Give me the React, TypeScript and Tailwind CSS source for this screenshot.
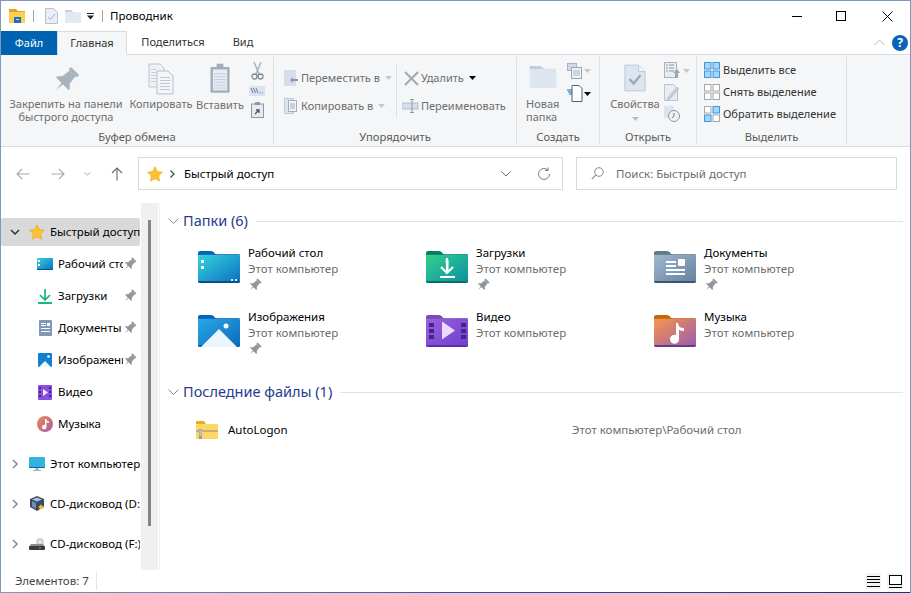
import React from "react";

const F = "font-['Noto_Sans','Open_Sans',sans-serif]";

function Pin({ c = "#8f979e", s = 14 }: { c?: string; s?: number }) {
  return (
    <svg width={s} height={s} viewBox="0 0 24 24" className="shrink-0">
      <g transform="rotate(45 12 12)" fill={c}>
        <rect x="7" y="1" width="10" height="3" rx="1" />
        <path d="M8.500 4h7l1 8 3 3v1.500H4.500V15l3-3z" />
        <path d="M11 16h2l-1 8z" />
      </g>
    </svg>
  );
}

function Folder({ id, from, to, tab, dark, children }: { id: string; from: string; to: string; tab: string; dark: string; children?: React.ReactNode }) {
  return (
    <svg width="42" height="33" viewBox="0 0 42 33" className="shrink-0">
      <defs>
        <linearGradient id={id} x1="0" y1="0" x2="1" y2="1">
          <stop offset="0" stopColor={from} />
          <stop offset="1" stopColor={to} />
        </linearGradient>
      </defs>
      <path d="M0 3a2 2 0 0 1 2-2h11q2 0 3 1.500L18 5H0z" fill={tab} />
      <path d="M0 6q0-1.500 1.500-1.500h8L16 4.500h24.500Q42 4.500 42 6v25q0 2-2 2H2q-2 0-2-2z" fill={`url(#${id})`} />
      <rect x="0" y="4" width="42" height="1" fill={tab} opacity=".7" />
      <path d="M0 31h42q0 2-2 2H2q-2 0-2-2z" fill={dark} />
      {children}
    </svg>
  );
}

const folders = {
  desk: (
    <Folder id="f1" from="#35d3dd" to="#0a6fc0" tab="#0a63b8" dark="#0d4f80">
      <rect x="3" y="10" width="3" height="3" fill="#fff" />
      <rect x="3" y="16" width="3" height="3" fill="#fff" />
      <rect x="33" y="29" width="2" height="2" fill="#cfeaf5" />
      <rect x="37" y="29" width="2" height="2" fill="#cfeaf5" />
    </Folder>
  ),
  down: (
    <Folder id="f2" from="#33d090" to="#0b8f9f" tab="#0a7c66" dark="#0d6b6a">
      <path d="M19.500 10h3v10h2.500l-4 0z" fill="#fff" />
      <path d="M21 8v15M15 17l6 6 6-6" fill="none" stroke="#fff" strokeWidth="2.200" />
      <rect x="14" y="26" width="15" height="2" fill="#fff" />
    </Folder>
  ),
  docs: (
    <Folder id="f3" from="#a2b8cf" to="#62809f" tab="#5d7b8c" dark="#3e5468">
      <rect x="12" y="11" width="10" height="2" fill="#fff" />
      <rect x="12" y="15" width="10" height="2" fill="#fff" />
      <rect x="24" y="9" width="7" height="7" rx="1" fill="#fff" />
      <rect x="12" y="19" width="19" height="2" fill="#fff" />
      <rect x="12" y="23" width="19" height="2" fill="#fff" />
    </Folder>
  ),
  pics: (
    <Folder id="f4" from="#2aa8e6" to="#0a69bc" tab="#0a63b8" dark="#0b5fa8">
      <circle cx="28" cy="12" r="2.500" fill="#fff" />
      <path d="M3 33 L21 15 L39 33z" fill="#eaf5fc" />
    </Folder>
  ),
  video: (
    <Folder id="f5" from="#9b5fe0" to="#6d3fd0" tab="#7a4bb5" dark="#5a2fa8">
      <path d="M16 10l13 9-13 9z" fill="#e8dcf8" transform="translate(0 -2.500)" />
      {[9, 15, 21].map((y) => (
        <g key={y}>
          <rect x="3" y={y} width="5" height="4" fill="#3f2a80" />
          <rect x="35" y={y} width="5" height="4" fill="#3f2a80" />
        </g>
      ))}
    </Folder>
  ),
  music: (
    <Folder id="f6" from="#f9964a" to="#9a5ab0" tab="#c8660e" dark="#5d3f8a">
      <path d="M22 9h2q0 5 6 5v3q-3.500 0-5-1.500V25a4.500 4.500 0 1 1-3-4z" fill="#fff" />
    </Folder>
  ),
};

function Star({ s = 16 }: { s?: number }) {
  return (
    <svg width={s} height={s} viewBox="0 0 24 24" className="shrink-0">
      <path d="M12 1l3.400 7.300 7.800 1-5.700 5.500 1.500 8L12 19l-7 3.800 1.500-8L.8 9.300l7.800-1z" fill="#fdc02f" stroke="#eaa211" strokeWidth=".8" />
    </svg>
  );
}

function Caret({ c = "#000" }: { c?: string }) {
  return (
    <svg width="7" height="4" viewBox="0 0 7 4" className="shrink-0">
      <path d="M0 0h7L3.500 4z" fill={c} />
    </svg>
  );
}

function SmallBtn({ icon, label, caret }: { icon: React.ReactNode; label: string; caret?: React.ReactNode }) {
  return (
    <div className="flex items-center h-[22px] gap-[1px]">
      <div className="w-[18px] h-[18px] flex items-center justify-center shrink-0">{icon}</div>
      <span className="whitespace-nowrap">{label}</span>
      {caret && <span className="ml-[4px]">{caret}</span>}
    </div>
  );
}

function Group({ w, label, children }: { w: string; label: string; children: React.ReactNode }) {
  return (
    <div className={`${w} shrink-0 h-full flex flex-col border-r border-[#dfe0e1]`}>
      <div className="h-[73px] flex">{children}</div>
      <div className="flex-1 flex items-center justify-center text-[#5a5a5a] text-[11.200px] leading-none">{label}</div>
    </div>
  );
}

function SelRow({ label, cells }: { label: string; cells: number[] }) {
  return (
    <div className="flex items-center h-[22px] gap-[3px]">
      <svg width="16" height="16" viewBox="0 0 16 16" className="shrink-0">
        {cells.map((c, i) => {
          const x = i % 2 === 0 ? 0 : 8.5;
          const y = i < 2 ? 0 : 8.5;
          return <rect key={i} x={x + .5} y={y + .5} width="6.500" height="6.500" fill={c ? "#a8d4f7" : "#fff"} stroke={c ? "#3a96dd" : "#a8a8a8"} />;
        })}
      </svg>
      <span className="whitespace-nowrap">{label}</span>
    </div>
  );
}

function Ribbon() {
  const disabled = "text-[#6e6e6e]";
  return (
    <div className="h-[92px] bg-[#f5f6f7] border-b border-[#dadbdc] flex items-stretch pt-[2px] pb-[2px] text-[11px] shrink-0">
      <Group w="w-[273px]" label="Буфер обмена">
        <div className={`flex ${disabled} text-center leading-[13px]`}>
          <div className="w-[126px] flex flex-col items-center pl-[4px] pt-[8px]">
            <div className="h-[30px] flex items-center justify-center">
              <Pin c="#a9b3be" s={28} />
            </div>
            <div className="mt-[2px] whitespace-nowrap">Закрепить на панели<br />быстрого доступа</div>
          </div>
          <div className="w-[68px] flex flex-col items-center pt-[6px]">
            <svg width="26" height="32" viewBox="0 0 26 32">
              <path d="M1 1h11l4 4v19H1z" fill="#eef1f5" stroke="#b9c4d2" />
              <path d="M9 8h11l5 5v18H9z" fill="#f3f5f8" stroke="#b3bfcd" />
              {[14, 17, 20, 23, 26].map((y) => <path key={y} d={`M12 ${y + .5}h10`} stroke="#bcc7d5" />)}
              {[6, 9, 12, 15, 18].map((y) => <path key={y} d={`M3 ${y + .5}h5`} stroke="#c5ced9" />)}
            </svg>
            <div className="mt-[2px] whitespace-nowrap">Копировать</div>
          </div>
          <div className="w-[50px] flex flex-col items-center pt-[5px]">
            <svg width="21" height="33" viewBox="0 0 22 33">
              <rect x=".5" y="4.500" width="20" height="27" fill="#a3adba" rx="1" />
              <rect x="3" y="7" width="15" height="22" fill="#e6ebf4" />
              <rect x="7" y="1" width="7" height="5" fill="#a3adba" />
              {[11, 14, 17, 20, 23, 26].map((y) => <path key={y} d={`M4 ${y + .5}h13`} stroke="#c4cfdf" />)}
            </svg>
            <div className="mt-[3px] whitespace-nowrap">Вставить</div>
          </div>
        </div>
        <div className="w-[22px] flex flex-col items-center pl-[2px] pt-[5px] gap-[6px]">
          <svg width="13" height="18" viewBox="0 0 13 18">
            <path d="M3 0l5 12M10 0L5 12" stroke="#a9b3be" strokeWidth="1.500" fill="none" />
            <circle cx="3.500" cy="14.500" r="2.500" fill="none" stroke="#7f8a97" strokeWidth="1.300" />
            <circle cx="9.500" cy="14.500" r="2.500" fill="none" stroke="#7f8a97" strokeWidth="1.300" />
          </svg>
          <svg width="16" height="10" viewBox="0 0 16 10">
            <rect width="16" height="10" fill="#dbe3ee" />
            <path d="M2 2l2 5M4.500 2l2 5M7 2l2 5" stroke="#6f7f92" fill="none" />
            <path d="M10.500 7h1M12.500 7h1" stroke="#6f7f92" />
          </svg>
          <svg width="13" height="16" viewBox="0 0 13 16">
            <rect x=".5" y="2" width="12" height="13.500" fill="#e7ebf1" stroke="#8d98a6" />
            <rect x="4" y="0" width="5" height="3" fill="#8d98a6" />
            <path d="M4 12l4-4M5 8h3v3" stroke="#4d5a68" strokeWidth="1.300" fill="none" />
          </svg>
        </div>
      </Group>

      <Group w="w-[243px]" label="Упорядочить">
        <div className={`flex ${disabled} w-full pl-[8px] pt-[10px]`}>
          <div className="w-[114px] flex flex-col gap-[6px]">
            <SmallBtn label="Переместить в" caret={<Caret c="#c8c8c8" />} icon={
              <svg width="14" height="16" viewBox="0 0 14 16"><rect width="12" height="16" fill="#d5deea" /><path d="M6 10l3-3v2h5v2H9v2z" fill="#8e99a6" /></svg>
            } />
            <SmallBtn label="Копировать в" caret={<Caret c="#c8c8c8" />} icon={
              <svg width="14" height="16" viewBox="0 0 14 16"><rect x=".5" y=".5" width="9" height="15" fill="#dde4ee" stroke="#c0ccdb" /><rect x="4.500" y="2.500" width="8" height="11" fill="#f1f3f6" stroke="#a4aebc" /><path d="M6 6h5M6 8h5M6 10h5" stroke="#a4aebc" /></svg>
            } />
          </div>
          <div className="w-px h-[54px] bg-[#dfe0e1] -mt-[3px]" />
          <div className="flex flex-col gap-[6px] pl-[5px]">
            <SmallBtn label="Удалить" caret={<Caret />} icon={
              <svg width="15" height="15" viewBox="0 0 15 15"><path d="M1 1l13 13M14 1L1 14" stroke="#9eaab7" strokeWidth="2" /></svg>
            } />
            <SmallBtn label="Переименовать" icon={
              <svg width="18" height="14" viewBox="0 0 18 14"><rect y="4" width="16" height="6" fill="#d5deea" stroke="#b1bdcb" /><path d="M10 1v12M8 .5h4M8 13.500h4" stroke="#8e99a6" fill="none" /></svg>
            } />
          </div>
        </div>
      </Group>

      <Group w="w-[83px]" label="Создать">
        <div className="flex pl-[9px] pt-[9px]">
          <div className={`w-[41px] ${disabled} leading-[13px]`}>
            <svg width="28" height="22" viewBox="0 0 30 25" className="ml-[3px]">
              <path d="M0 0h12l4 3h14v22H0z" fill="#dce5f0" />
              <path d="M0 0h12l4 3.500H0z" fill="#c1cee0" />
            </svg>
            <div className="mt-[9px]">Новая<br />папка</div>
          </div>
          <div className="flex flex-col gap-[6px] -mt-[3px]">
            <div className="flex items-center gap-[1px]">
              <svg width="16" height="16" viewBox="0 0 16 16"><rect x=".5" y=".5" width="9" height="7" fill="#cfd8e4" stroke="#a7b3c2" /><rect x="4.500" y="4.500" width="10" height="11" fill="#eef1f6" stroke="#99a6b6" /><path d="M6 8h7M6 10h7M6 12h7" stroke="#aeb9c7" /></svg>
              <Caret c="#c8c8c8" />
            </div>
            <div className="flex items-center gap-[1px]">
              <svg width="16" height="17" viewBox="0 0 16 17"><path d="M5 .5h7l3 3v13H5z" fill="#fff" stroke="#55606c" /><path d="M0 5h5M1 7h4M2 9h3" stroke="#1c62b3" /></svg>
              <Caret />
            </div>
          </div>
        </div>
      </Group>

      <Group w="w-[97px]" label="Открыть">
        <div className={`flex ${disabled} pl-[6px] pt-[7px]`}>
          <div className="w-[58px] flex flex-col items-center">
            <svg width="22" height="28" viewBox="0 0 24 30">
              <path d="M1 1h15l7 7v21H1z" fill="#dce5f0" stroke="#b6c6d8" />
              <path d="M16 1v7h7" fill="#f5f6f7" stroke="#b6c6d8" />
              <path d="M6 16l4.500 5L18 12" fill="none" stroke="#9aa7b6" strokeWidth="2.500" />
            </svg>
            <div className="mt-[4px]">Свойства</div>
            <div className="mt-[4px]"><Caret c="#bbbbbb" /></div>
          </div>
          <div className="flex flex-col gap-[5px] -mt-[2px]">
            <div className="flex items-center gap-[3px]">
              <svg width="16" height="17" viewBox="0 0 16 17"><rect x=".5" y=".5" width="12" height="15" fill="#e9edf2" stroke="#a8b4c2" /><path d="M2 3h2M2 6h2M2 9h2M5 3h5M5 6h5M5 9h5" stroke="#8e9aa8" /><path d="M11 16V11H9l4-4 3 4h-2v5z" fill="#99a6b6" /></svg>
              <Caret c="#c8c8c8" />
            </div>
            <svg width="15" height="17" viewBox="0 0 15 17"><path d="M.5.500h9l4 4v12H.5z" fill="#e9edf3" stroke="#b7c3d1" /><path d="M4 13L13 3l2 2-9 10-3 1z" fill="#c5cfdb" stroke="#a7b3c2" strokeWidth=".5" /></svg>
            <svg width="16" height="16" viewBox="0 0 16 16"><rect y="0" width="10" height="12" fill="#dce4ee" /><circle cx="10" cy="10" r="5.500" fill="#eef1f5" stroke="#8c98a6" /><path d="M10 7v3l-2 2" stroke="#6f7b89" fill="none" /></svg>
          </div>
        </div>
      </Group>

      <Group w="w-[150px]" label="Выделить">
        <div className="flex flex-col pl-[7px] pt-[2px] text-[#333]">
          <SelRow label="Выделить все" cells={[1, 1, 1, 1]} />
          <SelRow label="Снять выделение" cells={[0, 0, 0, 0]} />
          <SelRow label="Обратить выделение" cells={[0, 1, 1, 0]} />
        </div>
      </Group>
    </div>
  );
}

function NavRow({ icon, label, pin, sel, chev, top, h = "h-8" }: { icon: React.ReactNode; label: string; pin?: boolean; sel?: boolean; chev?: "open" | "closed"; top?: boolean; h?: string }) {
  return (
    <div className={`${h} flex items-center`}>
      <div className={`w-[139px] h-[28px] flex items-center overflow-hidden rounded-[2px] ${sel ? "bg-[#d9d9d9]" : ""} ${top ? "pl-[7px]" : "pl-[35px]"}`}>
        {top && (
          <div className="w-[14px] shrink-0 flex justify-center mr-[6px]">
            {chev === "open" ? (
              <svg width="10" height="7" viewBox="0 0 10 7"><path d="M1 1l4 4 4-4" fill="none" stroke="#333" strokeWidth="1.500" /></svg>
            ) : (
              <svg width="7" height="10" viewBox="0 0 7 10"><path d="M1 1l4 4-4 4" fill="none" stroke="#8a8a8a" strokeWidth="1.500" /></svg>
            )}
          </div>
        )}
        <div className="w-[18px] shrink-0 flex items-center justify-center">{icon}</div>
        <div className={`${pin ? "w-[65px]" : "flex-1"} ml-[4px] overflow-hidden whitespace-nowrap`}>{label}</div>
        {pin && <div><Pin s={14} /></div>}
      </div>
    </div>
  );
}

function Tile({ icon, name, pin }: { icon: React.ReactNode; name: string; pin?: boolean }) {
  return (
    <div className="flex h-[64px] pl-[38px]">
      <div>{icon}</div>
      <div className="ml-[8px] -mt-[5px] leading-[16px]">
        <div className="whitespace-nowrap text-black">{name}</div>
        <div className="whitespace-nowrap text-[#6d6d6d]">Этот компьютер</div>
        {pin && <div className="h-[16px] flex items-center"><Pin s={14} /></div>}
      </div>
    </div>
  );
}

function Section({ title }: { title: string }) {
  return (
    <div className="flex items-center h-[22px] pl-[8px] pr-[7px]">
      <svg width="11" height="7" viewBox="0 0 11 7" className="shrink-0"><path d="M.5.500l5 5 5-5" fill="none" stroke="#8a8a8a" /></svg>
      <span className="ml-[4px] text-[14.500px] whitespace-nowrap text-[#273b8c]">{title}</span>
      <div className="flex-1 h-px bg-[#e3e3e3] ml-[8px]" />
    </div>
  );
}

export default function App() {
  return (
    <div className={`w-[911px] h-[593px] overflow-hidden bg-white flex flex-col border-l border-t border-r border-[#7d9ab8] text-[11.500px] text-[#1a1a1a] ${F}`}>
      {/* title bar */}
      <div className="h-[30px] flex items-center shrink-0 pl-[8px]">
        <svg width="17" height="16" viewBox="0 0 17 16" className="shrink-0">
          <path d="M0 1h7l2 2h7v3H0z" fill="#e3a126" />
          <path d="M0 4h16v11H0z" fill="#fcd04f" />
          <rect x="5" y="9" width="7" height="6" fill="#1f6fc0" />
          <rect x="7" y="11" width="3" height="1" fill="#bcdcf5" />
        </svg>
        <div className="w-px h-[12px] bg-[#a0a0a0] ml-[7px]" />
        <svg width="13" height="16" viewBox="0 0 13 16" className="ml-[11px] shrink-0">
          <path d="M.5.500h8l4 4v11H.5z" fill="#e9eff6" stroke="#b3c3d5" />
          <path d="M3 9l2.500 2.500L10 6" fill="none" stroke="#a5b3c2" />
        </svg>
        <svg width="16" height="13" viewBox="0 0 16 13" className="ml-[7px] shrink-0">
          <path d="M0 0h6l2 2h8v11H0z" fill="#e2e9f2" />
          <path d="M0 0h6l2 2H0z" fill="#c5d0de" />
        </svg>
        <svg width="8" height="7" viewBox="0 0 8 7" className="ml-[6px] shrink-0"><rect width="7" height="1" fill="#222" /><path d="M0 2.500h7L3.500 6.500z" fill="#222" /></svg>
        <div className="w-px h-[12px] bg-[#a0a0a0] ml-[7px]" />
        <div className="ml-[7px] text-black">Проводник</div>
        <div className="flex-1" />
        <div className="w-[46px] h-full flex items-center justify-center pl-[3px]">
          <div className="w-[10px] h-px bg-black" />
        </div>
        <div className="w-[46px] h-full flex items-center justify-center">
          <div className="w-[10px] h-[10px] border border-black" />
        </div>
        <div className="w-[46px] h-full flex items-center justify-center">
          <svg width="11" height="11" viewBox="0 0 11 11"><path d="M.5.500l10 10M10.500.500l-10 10" stroke="#000" /></svg>
        </div>
      </div>

      {/* tabs */}
      <div className="h-[24px] flex items-stretch shrink-0 border-b border-[#dadbdc] text-[11px]">
        <div className="w-[56px] bg-[#0063b1] text-white flex items-center justify-center -mb-px">Файл</div>
        <div className="w-[70px] bg-[#f5f6f7] border-l border-r border-t border-[#dadbdc] flex items-center justify-center -mb-px text-[#333]">Главная</div>
        <div className="w-[92px] flex items-center justify-center text-[#333]">Поделиться</div>
        <div className="w-[48px] flex items-center justify-center text-[#333]">Вид</div>
        <div className="flex-1" />
        <div className="flex items-center pr-[2px] gap-[7px]">
          <svg width="11" height="7" viewBox="0 0 11 7"><path d="M.5 6l5-5 5 5" fill="none" stroke="#b5b5b5" /></svg>
          <div className="w-[16px] h-[16px] rounded-full bg-[#0a63b8] text-white font-bold flex items-center justify-center text-[12px] leading-none">?</div>
        </div>
      </div>

      <Ribbon />

      {/* address */}
      <div className="h-[56px] flex items-start pt-[10px] shrink-0 text-[#333]">
        <div className="w-[137px] h-[33px] flex items-center shrink-0 pl-[15px]">
          <svg width="14" height="12" viewBox="0 0 14 12"><path d="M13.500 6H1M6 1L1 6l5 5" fill="none" stroke="#a9a9a9" strokeWidth="1.100" /></svg>
          <svg width="14" height="12" viewBox="0 0 14 12" className="ml-[21px]"><path d="M.5 6H13M8 1l5 5-5 5" fill="none" stroke="#a9a9a9" strokeWidth="1.100" /></svg>
          <svg width="7" height="4" viewBox="0 0 7 4" className="ml-[19px]"><path d="M.5.500l3 2.500 3-2.500" fill="none" stroke="#a9a9a9" /></svg>
          <svg width="12" height="14" viewBox="0 0 12 14" className="ml-[20px]"><path d="M6 13.500V1M1 6l5-5 5 5" fill="none" stroke="#6a6a6a" strokeWidth="1.100" /></svg>
        </div>
        <div className="w-[425px] h-[33px] border border-[#d9d9d9] flex items-center pl-[8px] pr-[11px] shrink-0">
          <Star s={16} />
          <svg width="5" height="8" viewBox="0 0 5 8" className="ml-[7px]"><path d="M.5.500L4 4 .5 7.500" fill="none" stroke="#444" strokeWidth="1.200" /></svg>
          <span className="ml-[9px] text-black">Быстрый доступ</span>
          <div className="flex-1" />
          <svg width="10" height="6" viewBox="0 0 10 6"><path d="M.5.500L5 5 9.500.500" fill="none" stroke="#6a6a6a" /></svg>
          <svg width="14" height="14" viewBox="0 0 14 14" className="ml-[26px]"><path d="M12.500 7a5.500 5.500 0 1 1-1.700-4M11 .5V3.500H8" fill="none" stroke="#7a7a7a" /></svg>
        </div>
        <div className="w-[321px] h-[33px] ml-[13px] border border-[#d9d9d9] flex items-center pl-[14px] text-[#6d6d6d] shrink-0">
          <svg width="13" height="13" viewBox="0 0 13 13"><circle cx="8" cy="5" r="4.300" fill="none" stroke="#8a8a8a" /><path d="M4.800 8.200L.8 12.200" stroke="#8a8a8a" strokeWidth="1.200" /></svg>
          <span className="ml-[12px]">Поиск: Быстрый доступ</span>
        </div>
      </div>

      {/* body */}
      <div className="flex-1 flex min-h-0">
        {/* nav pane */}
        <div className="w-[140px] shrink-0 pt-[13px] text-black overflow-hidden">
          <NavRow top chev="open" sel label="Быстрый доступ" icon={<Star s={16} />} />
          <NavRow pin label="Рабочий стол" icon={
            <svg width="16" height="12" viewBox="0 0 16 12"><defs><linearGradient id="n1" x1="0" y1="0" x2="1" y2="1"><stop offset="0" stopColor="#35d3dd" /><stop offset="1" stopColor="#0a6fc0" /></linearGradient></defs><rect width="16" height="12" rx="1" fill="url(#n1)" /><rect x="1" y="2" width="2" height="2" fill="#fff" /><rect x="1" y="6" width="2" height="2" fill="#fff" /><rect y="11" width="16" height="1" fill="#0d4f80" /></svg>
          } />
          <NavRow pin label="Загрузки" icon={
            <svg width="14" height="15" viewBox="0 0 14 15"><path d="M7 0v11M2 6l5 5 5-5" fill="none" stroke="#1bb37f" strokeWidth="1.700" /><rect y="13" width="14" height="2" fill="#1bb38f" /></svg>
          } />
          <NavRow pin label="Документы" icon={
            <svg width="13" height="16" viewBox="0 0 13 16"><rect width="13" height="16" rx="1" fill="#7f98b5" /><rect x="2" y="3" width="5" height="1" fill="#fff" /><rect x="2" y="5" width="5" height="1" fill="#fff" /><rect x="8" y="3" width="3" height="3" fill="#fff" /><rect x="2" y="8" width="9" height="1" fill="#fff" /><rect x="2" y="11" width="9" height="1" fill="#fff" /></svg>
          } />
          <NavRow pin label="Изображения" icon={
            <svg width="14" height="14" viewBox="0 0 14 14"><rect width="14" height="14" rx="1" fill="#1080d0" /><path d="M1 14l6-6 6 6z" fill="#eaf5fc" /><circle cx="10.500" cy="3.500" r="1.300" fill="#fff" /></svg>
          } />
          <NavRow label="Видео" icon={
            <svg width="14" height="15" viewBox="0 0 14 15"><rect width="14" height="15" rx="1" fill="#8a4fe0" /><path d="M5 4l5 3.500L5 11z" fill="#f2e9fc" />{[2, 6, 10].map((y) => <g key={y}><rect x="1" y={y} width="2" height="2" fill="#3f2a80" /><rect x="11" y={y} width="2" height="2" fill="#3f2a80" /></g>)}</svg>
          } />
          <NavRow label="Музыка" icon={
            <svg width="16" height="16" viewBox="0 0 16 16"><defs><linearGradient id="n2" x1="0" y1="0" x2="1" y2="1"><stop offset="0" stopColor="#ef8a4e" /><stop offset="1" stopColor="#a85aa8" /></linearGradient></defs><circle cx="8" cy="8" r="8" fill="url(#n2)" /><path d="M8 3h1.500q0 2.500 2.500 2.500V7q-1.500 0-2.500-.8V11a2.200 2.200 0 1 1-1.500-2z" fill="#fff" /></svg>
          } />
          <div className="h-1" />
          <NavRow h="h-10" top chev="closed" label="Этот компьютер" icon={
            <svg width="16" height="15" viewBox="0 0 16 15"><rect width="16" height="11" rx="1" fill="#2fb4dd" /><rect y="10" width="16" height="1" fill="#10699f" /><rect x="6.500" y="11" width="3" height="2" fill="#9eb0bd" /><rect x="4" y="13" width="8" height="1" fill="#9eb0bd" /></svg>
          } />
          <NavRow h="h-10" top chev="closed" label="CD-дисковод (D:)" icon={
            <svg width="15" height="16" viewBox="0 0 15 16"><path d="M7 0l7 3v8l-7 4-7-4V3z" fill="#3b4a62" /><path d="M7 1.500l5 2-5 2-5-2z" fill="#a9c2dd" /><path d="M2 5l4 2v6l-4-2.500z" fill="#6f8fb4" /><path d="M11 8l1 2 2 .3-1.500 1.400.4 2.100-1.900-1-1.900 1 .4-2.100L8 10.300l2-.3z" fill="#fdc02f" /></svg>
          } />
          <NavRow h="h-10" top chev="closed" label="CD-дисковод (F:)" icon={
            <svg width="16" height="12" viewBox="0 0 16 12"><circle cx="11" cy="4" r="4" fill="#cfd6dd" /><circle cx="11" cy="4" r="1" fill="#fff" /><path d="M2 6h12l2 3H0z" fill="#8b8b8b" /><rect y="8" width="16" height="4" rx="1" fill="#3b3b3b" /><rect x="10" y="9.500" width="2" height="1" fill="#39d353" /></svg>
          } />
        </div>
        {/* scrollbar */}
        <div className="w-[17px] shrink-0 bg-[#f0f0f0] flex justify-center h-[367px]">
          <div className="w-[3px] h-[306px] mt-[17px] bg-[#858585]" />
        </div>
        <div className="w-px shrink-0 ml-[1px] bg-[#f0f0f0] h-[367px]" />
        {/* main */}
        <div className="flex-1 pt-[7px] min-w-0 text-black">
          <Section title="Папки (6)" />
          <div className="grid grid-cols-[228px_228px_228px] mt-[18px]">
            <Tile icon={folders.desk} name="Рабочий стол" pin />
            <Tile icon={folders.down} name="Загрузки" pin />
            <Tile icon={folders.docs} name="Документы" pin />
            <Tile icon={folders.pics} name="Изображения" pin />
            <Tile icon={folders.video} name="Видео" />
            <Tile icon={folders.music} name="Музыка" />
          </div>
          <div className="mt-[3px]"><Section title="Последние файлы (1)" /></div>
          <div className="flex items-center h-[24px] mt-[15px] pl-[36px]">
            <svg width="22" height="18" viewBox="0 0 22 18" className="shrink-0">
              <path d="M0 1q0-1 1-1h7l2 3H0z" fill="#e8a91e" />
              <rect y="3" width="22" height="15" rx="1" fill="#fcd667" />
              <rect y="9" width="22" height="2" fill="#c9b06a" />
              <rect x="3" y="8" width="3" height="10" fill="#9c9c9c" />
              <path d="M3.500 10h2M3.500 12h2M3.500 14h2" stroke="#eee" />
            </svg>
            <span className="ml-[10px] w-[344px] shrink-0">AutoLogon</span>
            <span className="text-[#6d6d6d]">Этот компьютер\Рабочий стол</span>
          </div>
        </div>
      </div>

      {/* status */}
      <div className="h-[21px] shrink-0 flex items-center pl-[14px] pr-[7px] pb-[1px] text-[#444]">
        <span className="w-[82px] border-r border-[#e6e6e6] leading-[18px] whitespace-nowrap">Элементов: 7</span>
        <div className="flex-1" />
        <div className="w-[16px] h-[16px] flex items-center justify-center bg-[#f4f4f4]">
          <svg width="13" height="11" viewBox="0 0 13 11"><path d="M0 .5h13M0 3.500h13M0 6.500h13M0 10.500h13" stroke="#000" /></svg>
        </div>
        <div className="w-[16px] h-[16px] ml-[6px] flex items-center justify-center bg-[#f4f4f4]">
          <svg width="13" height="13" viewBox="0 0 13 13"><rect x=".5" y=".5" width="12" height="9" fill="#fff" stroke="#000" /><path d="M0 12.500h13" stroke="#000" /></svg>
        </div>
      </div>
      <div className="h-px shrink-0 bg-gradient-to-r from-[#7d9ab8] via-[#0a63b8] to-[#0a3a80]" />
    </div>
  );
}
